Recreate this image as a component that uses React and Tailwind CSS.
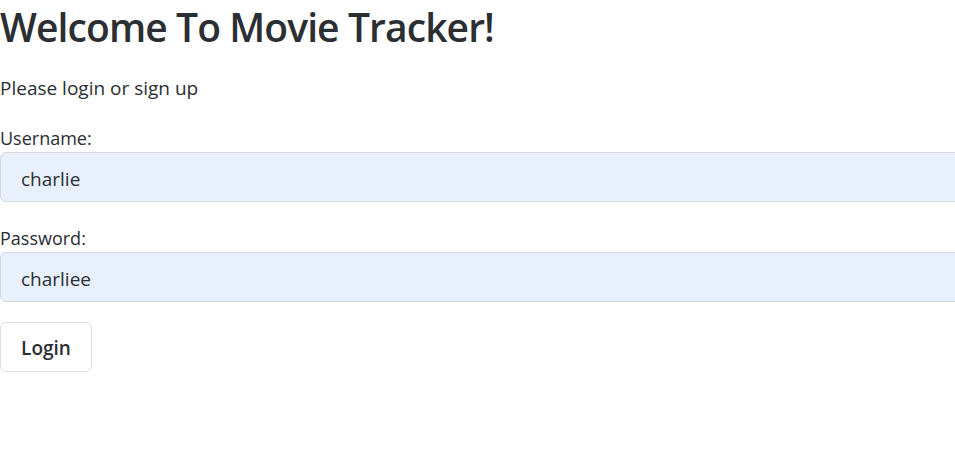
import React, { useState } from 'react';

const App = () => {
  const [username, setUsername] = useState('charlie');
  const [password, setPassword] = useState('charliee');

  return (
    <div className="min-h-screen w-full overflow-hidden bg-white text-[#2b2e33] font-['Open_Sans',sans-serif]">
      <h1 className="pt-[2px] text-[39px] leading-[50px] font-semibold tracking-[-0.9px]">Welcome To Movie Tracker!</h1>
      <p className="mt-[24px] text-[19px] leading-[24px]">Please login or sign up</p>

      <form className="mt-[26px]" onSubmit={(e) => e.preventDefault()}>
        <label className="block text-[18px] leading-[24px]">Username:</label>
        <input
          type="text"
          value={username}
          onChange={(e) => setUsername(e.target.value)}
          className="block mt-[2px] w-[1000px] h-[50px] px-[20px] pt-[4px] text-[19px] bg-[#e8f0fe] border border-[#d4d6da] rounded-l-[6px] outline-none"
        />

        <label className="block mt-[24px] text-[18px] leading-[24px]">Password:</label>
        <input
          type="text"
          value={password}
          onChange={(e) => setPassword(e.target.value)}
          className="block mt-[2px] w-[1000px] h-[50px] px-[20px] pt-[4px] text-[19px] bg-[#e8f0fe] border border-[#d4d6da] rounded-l-[6px] outline-none"
        />

        <button
          type="submit"
          className="mt-[20px] h-[50px] w-[92px] pt-[3px] border border-[#dcdfe3] rounded-[6px] bg-white text-[19px] font-semibold"
        >
          Login
        </button>
      </form>
    </div>
  );
};

export default App;
